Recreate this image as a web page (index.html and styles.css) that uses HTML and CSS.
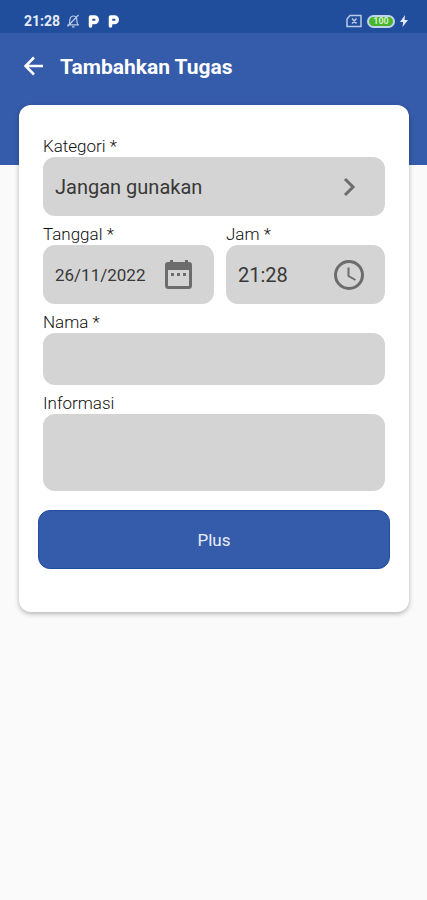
FILE: index.html
```html
<!DOCTYPE html>
<html lang="id">
<head>
<meta charset="utf-8">
<meta name="viewport" content="width=device-width, initial-scale=1">
<title>Tambahkan Tugas</title>
<link rel="stylesheet" href="styles.css">
</head>
<body>
<div class="status">
  <div class="status-group">
    <span class="status-time">21:28</span>
    <svg class="bell" viewBox="0 0 14 14" width="14" height="14" aria-hidden="true"><path d="M1.500 10.800h11.500M3 10.500c1-1.500.6-3 .9-5C4.400 3 5.800 2 7.400 2s3 1 3.400 3.500c.2 2 0 3.500 1 5M6 12.800h2.500M1.500 12.500L12.500 1"/></svg>
    <svg class="parking" viewBox="0 0 12 14" width="12" height="14" aria-hidden="true"><path d="M2.500 12V3h4a2.500 2.500 0 0 1 0 5.500H4.500"/></svg>
    <svg class="parking" viewBox="0 0 12 14" width="12" height="14" aria-hidden="true"><path d="M2.500 12V3h4a2.500 2.500 0 0 1 0 5.500H4.500"/></svg>
  </div>
  <div class="status-group status-right">
    <svg class="sim" viewBox="0 0 16 14" width="16" height="14" aria-hidden="true"><path d="M4 1.500H15v11H1V5zM6 4.500l4.500 5M10.500 4.500L6 9.500"/></svg>
    <span class="battery">100</span>
    <svg class="bolt" viewBox="0 0 8 12" width="8" height="12" aria-hidden="true"><path d="M5 0L0 7h3.200L2.500 12 8 5H4.600z"/></svg>
  </div>
</div>
<header class="header">
  <button class="back" type="button" aria-label="Kembali">
    <svg viewBox="0 0 20 20" width="20" height="20"><path d="M19 10H2M10 1.500L1.500 10l8.500 8.500"/></svg>
  </button>
  <h1 class="title">Tambahkan Tugas</h1>
</header>
<main class="card">
  <form class="form">
    <div class="field">
      <label class="label" for="kategori">Kategori *</label>
      <div class="box">
        <select class="control large" id="kategori"><option>Jangan gunakan</option></select>
        <svg class="icon chevron" viewBox="0 0 32 32" width="32" height="32" aria-hidden="true"><path d="M12 8l8 8-8 8"/></svg>
      </div>
    </div>
    <div class="row">
      <div class="field date">
        <label class="label" for="tanggal">Tanggal *</label>
        <div class="box">
          <input class="control medium" id="tanggal" type="text" value="26/11/2022">
          <svg class="icon" viewBox="0 0 32 32" width="32" height="32" aria-hidden="true"><path class="solid" d="M6 3h2V1h3v2h12V1h3v2h1a3 3 0 0 1 3 3v5H3V6a3 3 0 0 1 3-3z"/><path d="M4.500 10v16.500a2 2 0 0 0 2 2h20a2 2 0 0 0 2-2V10"/><path class="solid" d="M9 14h3v3H9zM15 14h3v3h-3zM21 14h3v3h-3z"/></svg>
        </div>
      </div>
      <div class="field time">
        <label class="label" for="jam">Jam *</label>
        <div class="box">
          <input class="control large" id="jam" type="text" value="21:28">
          <svg class="icon" viewBox="0 0 32 32" width="32" height="32" aria-hidden="true"><circle cx="16" cy="16" r="13.500"/><path class="thin" d="M15.500 8.500V17l7 4"/></svg>
        </div>
      </div>
    </div>
    <div class="field">
      <label class="label" for="nama">Nama *</label>
      <input class="entry" id="nama" type="text">
    </div>
    <div class="field">
      <label class="label" for="informasi">Informasi</label>
      <textarea class="entry tall" id="informasi"></textarea>
    </div>
  </form>
  <button class="submit" type="button">Plus</button>
</main>
</body>
</html>
```
FILE: styles.css
```css
* { box-sizing: border-box; }

body {
  margin: 0;
  min-height: 100vh;
  background: #fafafa;
  color: #101010;
  font-family: Roboto, "Liberation Sans", sans-serif;
}

svg { display: block; flex: none; fill: none; stroke: #fff; }

.status {
  display: flex;
  justify-content: space-between;
  align-items: center;
  height: 33px;
  padding: 9px 19px 0 24px;
  background: #204e9c;
}
.status-group { display: flex; align-items: center; gap: 8px; }
.status-right { gap: 5px; }
.status-time { margin-right: -2px; color: #e4ebf8; font-size: 14px; font-weight: 700; line-height: 16px; }
.bell { stroke: #b9c9e8; stroke-width: 1.2; }
.parking { stroke-width: 3.5; stroke-linecap: round; stroke-linejoin: round; }
.sim { stroke: #b9c9e8; stroke-width: 1.5; }
.bolt { fill: #e4ebf8; stroke: none; }
.battery {
  width: 28px;
  height: 13px;
  border: 2px solid #c3d2ee;
  border-radius: 7px;
  background: #49b52c;
  color: #d3f2c8;
  font-size: 9px;
  font-weight: 700;
  line-height: 9px;
  text-align: center;
}

.header {
  display: flex;
  align-items: flex-start;
  gap: 16px;
  height: 132px;
  padding: 20px 24px 0;
  background: #355bab;
}
.back {
  display: flex;
  padding: 3px 0;
  border: 0;
  background: none;
}
.back svg { stroke-width: 2.5; }
.title { margin: 0; color: #fff; font-size: 21px; font-weight: 700; line-height: 28px; }

.card {
  margin: -60px 18px 0 19px;
  padding: 31px 19px 43px;
  border-radius: 12px;
  background: #fff;
  box-shadow: 0 2px 5px rgba(0, 0, 0, 0.28);
}
.form {
  display: flex;
  flex-direction: column;
  gap: 8px;
  padding: 0 5px;
}
.row { display: flex; gap: 12px; }
.field { display: flex; flex-direction: column; min-width: 0; }
.date { flex: 171; }
.time { flex: 159; }
.label { font-size: 17px; font-weight: 300; line-height: 21px; }

.box {
  display: flex;
  align-items: center;
  height: 59px;
  padding: 0 20px 0 12px;
  border-radius: 12px;
  background: #d4d4d4;
}
.control {
  flex: 1;
  width: 0;
  min-width: 0;
  padding: 0;
  border: 0;
  appearance: none;
  background: none;
  color: #383838;
  font-family: inherit;
}
.large { font-size: 20px; }
.medium { font-size: 17px; }
.icon { stroke: #6c6c6c; stroke-width: 3; }
.solid { fill: #6c6c6c; stroke: none; }
.thin { stroke-width: 2; }

.entry {
  width: 100%;
  height: 52px;
  padding: 12px;
  border: 0;
  border-radius: 12px;
  background: #d4d4d4;
  color: #383838;
  font-family: inherit;
  font-size: 17px;
  resize: none;
}
.tall { height: 77px; }

.submit {
  display: block;
  width: 100%;
  height: 59px;
  margin-top: 19px;
  border: 1px solid #204e9c;
  border-radius: 12px;
  background: #355bab;
  color: #e8effb;
  font-family: inherit;
  font-size: 17px;
}
```
